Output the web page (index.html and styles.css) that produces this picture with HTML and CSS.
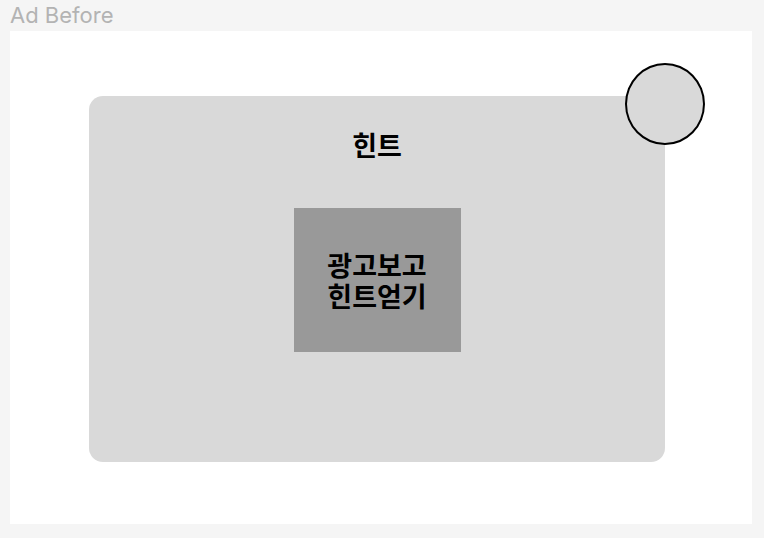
FILE: index.html
```html
<!DOCTYPE html>
<html lang="ko">
<head>
    <meta charset="UTF-8">
    <meta name="viewport" content="width=device-width, initial-scale=1.0">
    <title>Ad Before</title>
    <link rel="stylesheet" href="styles.css">
</head>
<body>
<div class="frame-label">Ad Before</div>
<div class="frame">
    <div class="hint-card">
        <div class="close-circle"></div>
        <h2 class="hint-title">힌트</h2>
        <div class="ad-btn">
            <span class="ad-line">광고보고</span>
            <span class="ad-line">힌트얻기</span>
        </div>
    </div>
</div>
</body>
</html>
```

FILE: styles.css
```css
body {
    margin: 0;
    background-color: #f5f5f5;
    font-family: Inter, "Noto Sans CJK KR", sans-serif;
    width: 764px;
    height: 538px;
    overflow: hidden;
}
.frame-label {
    margin: 2px 0 0 10px;
    height: 29px;
    font-size: 22px;
    line-height: 26px;
    color: #b3b3b3;
}
.frame {
    margin-left: 10px;
    width: 742px;
    height: 493px;
    background-color: #ffffff;
    box-sizing: border-box;
    padding: 65px 0 0 79px;
}
.hint-card {
    position: relative;
    width: 576px;
    height: 366px;
    background-color: #d9d9d9;
    border-radius: 14px;
    box-sizing: border-box;
    padding-top: 31px;
    display: flex;
    flex-direction: column;
    align-items: center;
}
.close-circle {
    position: absolute;
    top: -33px;
    right: -40px;
    width: 76px;
    height: 78px;
    border: 2px solid #000;
    border-radius: 50%;
    background-color: #d9d9d9;
}
.hint-title {
    margin: 0;
    font-family: "Noto Sans CJK KR", sans-serif;
    font-size: 27px;
    line-height: 36px;
    font-weight: 700;
    color: #000;
}
.ad-btn {
    margin-top: 45px;
    width: 167px;
    height: 144px;
    background-color: #999999;
    display: flex;
    flex-direction: column;
    align-items: center;
    justify-content: center;
    font-family: "Noto Sans CJK KR", sans-serif;
    font-size: 27px;
    font-weight: 700;
    color: #000;
}
.ad-line {
    display: block;
    height: 31px;
    line-height: 31px;
}
```
